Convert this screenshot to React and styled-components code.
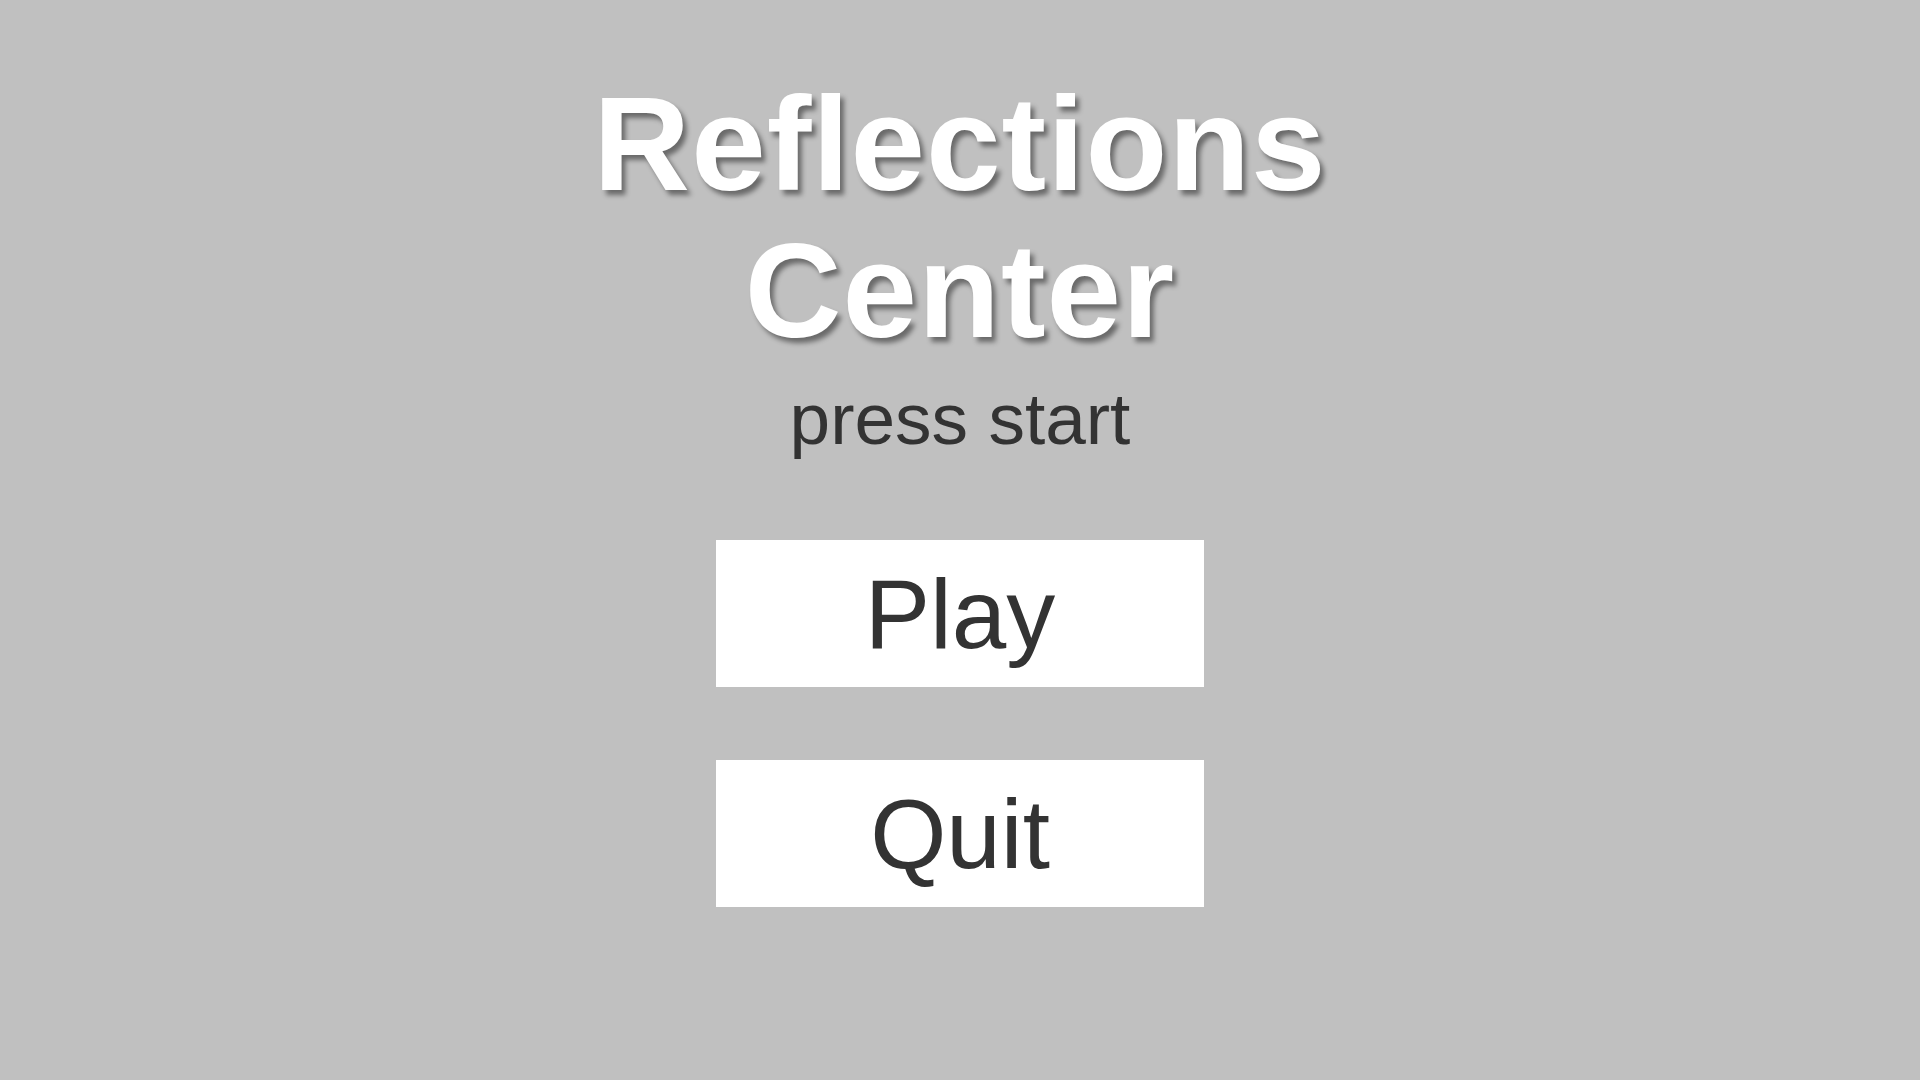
import React from 'react'
import styled, { createGlobalStyle } from 'styled-components'

const GlobalStyle = createGlobalStyle`
  html, body {
    margin: 0;
    padding: 0;
    background: #c0c0c0;
  }
  body {
    font-family: "Liberation Sans", Arial, sans-serif;
  }
`

const Screen = styled.main`
  width: 100vw;
  height: 100vh;
  background: #c0c0c0;
  display: flex;
  flex-direction: column;
  align-items: center;
  padding-top: 70px;
  box-sizing: border-box;
  overflow: hidden;
`

const Title = styled.h1`
  margin: 0;
  font-size: 134px;
  line-height: 147px;
  font-weight: 700;
  letter-spacing: 1px;
  color: #ffffff;
  text-align: center;
  text-shadow: 4px 5px 5px rgba(0, 0, 0, 0.45);
`

const Subtitle = styled.p`
  margin: 18px 0 0;
  font-size: 73px;
  line-height: 1;
  color: #333333;
`

const Menu = styled.nav`
  display: flex;
  flex-direction: column;
  gap: 73px;
  margin-top: 85px;
`

const MenuButton = styled.button`
  width: 488px;
  height: 147px;
  border: none;
  background: #ffffff;
  color: #333333;
  font-family: "Liberation Sans", Arial, sans-serif;
  font-size: 98px;
  line-height: 1;
  padding: 0;
  display: flex;
  align-items: center;
  justify-content: center;
  cursor: pointer;
`

const App = () => {
  return (
    <>
      <GlobalStyle />
      <Screen>
        <Title>
          Reflections
          <br />
          Center
        </Title>
        <Subtitle>press start</Subtitle>
        <Menu>
          <MenuButton>Play</MenuButton>
          <MenuButton>Quit</MenuButton>
        </Menu>
      </Screen>
    </>
  )
}

export default App
